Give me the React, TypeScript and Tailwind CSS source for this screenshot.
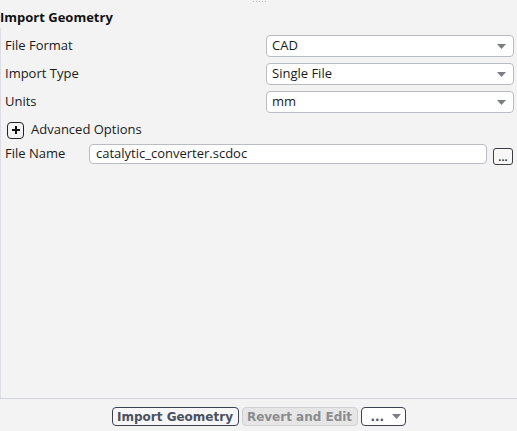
import React from "react"

const ui = { fontFamily: '"Open Sans", "Noto Sans", sans-serif' }
const btn = { fontFamily: '"DejaVu Sans", Verdana, sans-serif' }

function Caret({ className = "" }: { className?: string }) {
  return (
    <svg width="9" height="5" viewBox="0 0 9 5" className={className} aria-hidden>
      <path d="M0 0h9L4.5 5z" fill="#7a7d84" />
    </svg>
  )
}

function Select({ value }: { value: string }) {
  return (
    <div className="flex h-[22px] w-[248px] items-center justify-between rounded-[4px] border border-[#b9bcc3] bg-white pl-[5px] pr-[7px] text-[13px] text-[#1a1a1a]">
      <span>{value}</span>
      <Caret />
    </div>
  )
}

function Row({ label, value }: { label: string; value: string }) {
  return (
    <div className="flex items-center justify-between">
      <span className="text-[13px] text-[#1a1a1a]">{label}</span>
      <Select value={value} />
    </div>
  )
}

export default function App() {
  return (
    <div className="flex h-[431px] w-[517px] flex-col bg-[#f3f3f3]" style={ui}>
      <div className="relative flex h-[399px] flex-col border-b border-[#d2d4db]">
        <div className="absolute left-[253px] top-[1px] flex gap-[2px]">
          {[0, 1, 2, 3, 4].map((i) => (
            <span key={i} className="h-[1px] w-[1px] bg-[#b5b7bd]" />
          ))}
        </div>
        <div className="h-[28px] pt-[8px] text-[13px] font-bold leading-[18px] text-[#111]">
          Import Geometry
        </div>
        <div className="flex flex-1 flex-col border-l border-[#dcdee3] pl-[4px] pr-[3px] pt-[7px]">
          <div className="flex flex-col gap-[6px]">
            <Row label="File Format" value="CAD" />
            <Row label="Import Type" value="Single File" />
            <Row label="Units" value="mm" />
          </div>
          <div className="mt-[8px] flex h-[18px] items-center gap-[7px] pl-[2px]">
            <div className="flex h-[17px] w-[17px] items-center justify-center rounded-[4px] border-[1.5px] border-[#222]">
              <svg width="10" height="10" viewBox="0 0 10 10" aria-hidden>
                <path d="M5 1v8M1 5h8" stroke="#111" strokeWidth="2" />
              </svg>
            </div>
            <span className="text-[13px] text-[#1a1a1a]">Advanced Options</span>
          </div>
          <div className="mt-[5px] flex h-[20px] items-center">
            <span className="w-[84px] text-[13px] text-[#1a1a1a]">File Name</span>
            <div className="flex h-[20px] w-[398px] items-center rounded-[4px] border border-[#b9bcc3] bg-white pl-[6px] text-[13px] text-[#1a1a1a]">
              catalytic_converter.scdoc
            </div>
            <div className="ml-[6px] mt-[4px] flex h-[17px] w-[20px] items-end justify-center rounded-[3px] border border-[#3a3d44] bg-[#f7f7f7] pb-[2px] text-[11px] font-bold leading-[10px] text-[#333]">
              ...
            </div>
          </div>
        </div>
      </div>
      <div className="flex flex-1 items-start justify-center gap-[3px] pt-[8px]" style={btn}>
        <div className="flex h-[19px] w-[127px] items-center justify-center rounded-[4px] border border-[#3d4250] bg-[#f7f7f7] text-[12px] font-bold text-[#4b5160]">
          Import Geometry
        </div>
        <div className="flex h-[19px] w-[116px] items-center justify-center rounded-[4px] border border-[#cfd0d3] bg-[#e6e6e6] text-[12px] font-bold text-[#8a8c90]">
          Revert and Edit
        </div>
        <div className="flex h-[19px] w-[45px] items-center justify-between rounded-[4px] border border-[#3d4250] bg-white pl-[9px] pr-[4px] text-[12px] font-bold text-[#4b5160]">
          <span>...</span>
          <Caret />
        </div>
      </div>
    </div>
  )
}
